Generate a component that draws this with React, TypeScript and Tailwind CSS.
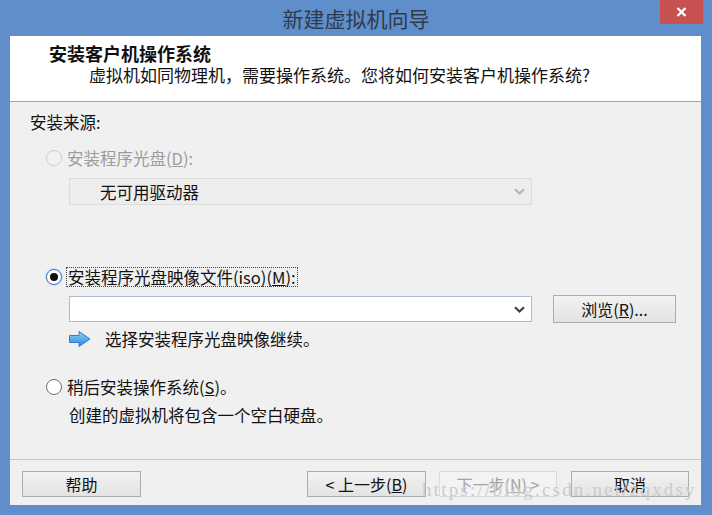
import React from 'react';

const font = { fontFamily: '"Microsoft YaHei", "Noto Sans CJK SC", "Noto Sans", sans-serif' };

function Radio({ checked, disabled }: { checked?: boolean; disabled?: boolean }) {
  return (
    <span
      className={`w-[16px] h-[16px] rounded-full border flex items-center justify-center shrink-0 ${
        disabled
          ? 'border-[#cfcfcf] bg-[#f2f2f2]'
          : checked
          ? 'border-[#3d7bc4] bg-white shadow-[0_0_0_1px_#c5dcf3]'
          : 'border-[#6f6f6f] bg-white'
      }`}
    >
      {checked && <span className="w-[8px] h-[8px] rounded-full bg-[#111]" />}
    </span>
  );
}

function Chevron({ color }: { color: string }) {
  return (
    <svg width="11" height="7" viewBox="0 0 11 7">
      <path d="M1 1.2 L5.5 5.5 L10 1.2" fill="none" stroke={color} strokeWidth="2.2" />
    </svg>
  );
}

function Btn({ children, disabled, className = '' }: { children: React.ReactNode; disabled?: boolean; className?: string }) {
  return (
    <div
      className={`h-[26px] border flex items-center justify-center text-[16px] leading-[20px] ${
        disabled
          ? 'border-[#d9d9d9] bg-[#f3f3f3] text-[#a3a3a3]'
          : 'border-[#adadad] bg-gradient-to-b from-[#f2f2f2] to-[#e3e3e3] text-[#111]'
      } ${className}`}
    >
      {children}
    </div>
  );
}

export default function App() {
  return (
    <div className="w-[712px] h-[515px] bg-[#5f8ecb] flex flex-col overflow-hidden" style={font}>
      {/* Title bar */}
      <div className="h-[36px] flex items-start shrink-0">
        <div className="flex-1 h-[36px] flex items-center justify-center pl-[52px] text-[21px] leading-[24px] text-[#2e3b4b]">
          新建虚拟机向导
        </div>
        <div className="w-[43px] h-[24px] bg-[#c75050] mr-[9px] flex items-center justify-center">
          <svg width="11" height="10" viewBox="0 0 11 10">
            <path d="M1.5 1 L9.5 9 M9.5 1 L1.5 9" stroke="white" strokeWidth="2.4" />
          </svg>
        </div>
      </div>

      {/* Client area */}
      <div className="ml-[10px] w-[691px] h-[469px] flex flex-col bg-[#f0f0f0]">
        {/* Header */}
        <div className="h-[66px] bg-white border-b border-[#a0a0a0] pt-[6px] shrink-0">
          <div className="pl-[39px] text-[18px] font-bold text-[#111] leading-[22px]">安装客户机操作系统</div>
          <div className="pl-[79px] text-[17px] text-[#111] leading-[22px]">
            虚拟机如同物理机，需要操作系统。您将如何安装客户机操作系统?
          </div>
        </div>

        {/* Body */}
        <div className="flex-1 flex flex-col pl-[20px] pt-[10px] text-[16.5px] text-[#111]">
          <div className="leading-[20px]">安装来源:</div>

          <div className="flex items-center gap-[5px] mt-[16px] pl-[16px] leading-[20px] text-[#9c9c9c]">
            <Radio disabled />
            <span>
              安装程序光盘(<span className="underline">D</span>):
            </span>
          </div>

          <div className="ml-[39px] mt-[10px] w-[463px] h-[27px] border border-[#dcdcdc] bg-[#ededed] flex items-center justify-between pl-[30px] pr-[6px]">
            <span className="text-[#111] leading-[20px]">无可用驱动器</span>
            <Chevron color="#b5b5b5" />
          </div>

          <div className="flex items-center gap-[4px] mt-[62px] pl-[16px] leading-[20px]">
            <Radio checked />
            <span className="border border-dotted border-[#444] px-[1px] leading-[18px]">
              安装程序光盘映像文件(iso)(<span className="underline">M</span>):
            </span>
          </div>

          <div className="flex items-center mt-[8px] ml-[39px]">
            <div className="w-[463px] h-[26px] border border-[#aebcd0] bg-white flex items-center justify-end pr-[6px]">
              <Chevron color="#404040" />
            </div>
            <Btn className="w-[123px] h-[28px] ml-[21px]">
              浏览(<span className="underline">R</span>)...
            </Btn>
          </div>

          <div className="flex items-center mt-[5px] ml-[39px] leading-[22px]">
            <svg width="22" height="16" viewBox="0 0 22 16" className="shrink-0">
              <defs>
                <linearGradient id="ar" x1="0" y1="0" x2="0" y2="1">
                  <stop offset="0" stopColor="#8fd0f7" />
                  <stop offset="1" stopColor="#2a86df" />
                </linearGradient>
              </defs>
              <path d="M0.5 4.5 H10 V0.5 L21 8 L10 15.5 V11.5 H0.5 Z" fill="url(#ar)" stroke="#2f80d1" strokeWidth="1" />
            </svg>
            <span className="ml-[14px]">选择安装程序光盘映像继续。</span>
          </div>

          <div className="flex items-center gap-[5px] mt-[27px] pl-[16px] leading-[20px]">
            <Radio />
            <span>
              稍后安装操作系统(<span className="underline">S</span>)。
            </span>
          </div>

          <div className="ml-[39px] mt-[8px] leading-[20px]">创建的虚拟机将包含一个空白硬盘。</div>
        </div>

        {/* Footer */}
        <div className="h-[46px] border-t border-[#c6c6c6] flex items-start pt-[11px] pl-[12px] shrink-0 relative">
          <Btn className="w-[119px]">帮助</Btn>
          <Btn className="w-[119px] ml-[166px]">
            &lt; 上一步(<span className="underline">B</span>)
          </Btn>
          <Btn disabled className="w-[118px] ml-[13px]">
            下一步(<span className="underline">N</span>) &gt;
          </Btn>
          <Btn className="w-[118px] ml-[14px]">取消</Btn>
          <div
            className="absolute left-[412px] top-[20px] text-[19px] leading-[20px] text-[#cbcbcb] tracking-[2.2px] pointer-events-none"
            style={{ fontFamily: '"Liberation Serif", serif' }}
          >
            https://blog.csdn.net/zqxdsy
          </div>
        </div>
      </div>
    </div>
  );
}
